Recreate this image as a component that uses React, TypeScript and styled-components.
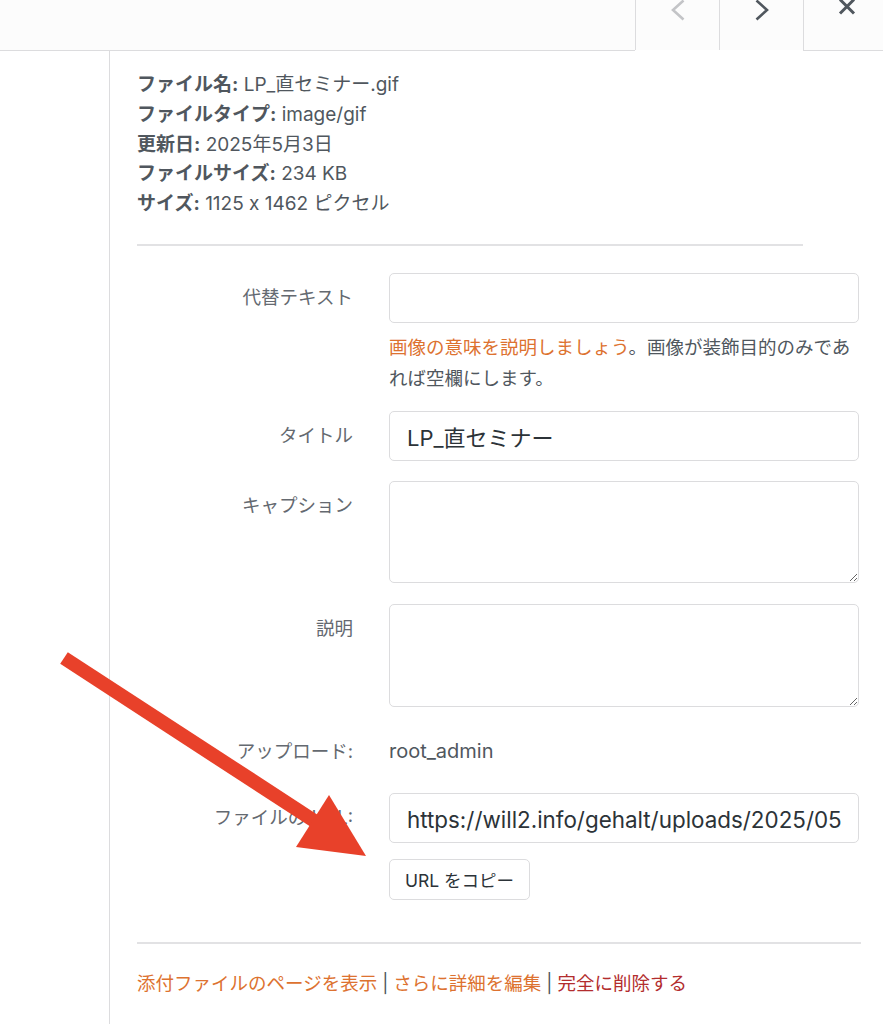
import React from "react";
import styled, { createGlobalStyle } from "styled-components";

const GlobalStyle = createGlobalStyle`
  html, body { margin: 0; padding: 0; background: #fff; }
  body {
    font-family: "Inter", "Noto Sans CJK JP", sans-serif;
    color: #50575e;
    overflow: hidden;
  }
  * { box-sizing: border-box; }
`;

const Page = styled.div`
  position: relative;
  width: 883px;
  height: 1024px;
  overflow: hidden;
`;

const Header = styled.header`
  display: flex;
  height: 51px;
  background: #fff;
`;

const HeaderSpacer = styled.div`
  flex: 1;
  height: 51px;
  background: #fcfcfc;
  border-bottom: 1px solid #dcdcde;
`;

const NavButton = styled.button<{ $width: number; $underline?: boolean; $pad?: number }>`
  flex: none;
  width: ${(p) => p.$width}px;
  height: ${(p) => (p.$underline ? 51 : 50)}px;
  padding: 0 0 0 ${(p) => p.$pad ?? 0}px;
  margin: 0;
  border: 0;
  border-left: 1px solid #dcdcde;
  border-bottom: ${(p) => (p.$underline ? "1px solid #dcdcde" : "0")};
  background: #fcfcfc;
  display: flex;
  justify-content: center;
  align-items: flex-start;
  overflow: hidden;
  svg { margin-top: -4px; display: block; }
`;

const Main = styled.main`
  display: flex;
  height: 973px;
`;

const Gutter = styled.div`
  flex: none;
  width: 109px;
`;

const Panel = styled.section`
  flex: 1;
  border-left: 1px solid #dcdcde;
  padding: 19px 22px 0 27px;
`;

const Details = styled.div`
  width: 666px;
  padding-bottom: 25px;
  border-bottom: 2px solid #e2e2e4;
  font-size: 19px;
  line-height: 29.75px;
  color: #50575e;
  strong { font-weight: 700; color: #50575e; }
`;

const Row = styled.div<{ $mt: number }>`
  display: grid;
  grid-template-columns: 216px 470px;
  column-gap: 36px;
  margin-top: ${(p) => p.$mt}px;
`;

const Label = styled.label`
  text-align: right;
  padding-top: 9px;
  font-size: 18.5px;
  line-height: 30px;
  color: #646970;
  white-space: nowrap;
`;

const Field = styled.div`
  display: flex;
  flex-direction: column;
  align-items: flex-start;
`;

const TextInput = styled.input<{ $size?: number }>`
  width: 470px;
  height: 50px;
  border: 1px solid #dcdcde;
  border-radius: 5px;
  background: #fff;
  padding: 0 17px;
  font-family: "Inter", "Noto Sans CJK JP", sans-serif;
  font-size: ${(p) => p.$size ?? 22}px;
  color: #2c3338;
  outline: none;
`;

const TextArea = styled.textarea<{ $h: number }>`
  width: 470px;
  height: ${(p) => p.$h}px;
  border: 1px solid #dcdcde;
  border-radius: 5px;
  background: #fff;
  padding: 8px 17px;
  font-family: "Inter", "Noto Sans CJK JP", sans-serif;
  font-size: 22px;
  color: #2c3338;
  outline: none;
  display: block;
`;

const Help = styled.p`
  margin: 9px 0 0;
  font-size: 18.5px;
  line-height: 31px;
  color: #50575e;
`;

const Link = styled.a<{ $danger?: boolean }>`
  color: ${(p) => (p.$danger ? "#b32d2e" : "#dd7230")};
  text-decoration: none;
`;

const Value = styled.div`
  padding-top: 9px;
  font-size: 20px;
  line-height: 30px;
  color: #50575e;
`;

const CopyButton = styled.button`
  margin-top: 16px;
  height: 41px;
  padding: 0 15px;
  border: 1px solid #dcdcde;
  border-radius: 5px;
  background: #fff;
  font-family: "Inter", "Noto Sans CJK JP", sans-serif;
  font-size: 17.5px;
  color: #2c3338;
`;

const Divider = styled.hr`
  margin: 42px 0 0;
  border: 0;
  border-top: 2px solid #e2e2e4;
`;

const Actions = styled.div`
  margin-top: 24px;
  font-size: 18.5px;
  line-height: 30px;
  color: #50575e;
`;

const Sep = styled.span`
  color: #50575e;
  margin: 0 5px;
`;

const ArrowLayer = styled.svg`
  position: absolute;
  left: 0;
  top: 0;
  pointer-events: none;
`;

const Chevron = ({ dir, color }: { dir: "left" | "right"; color: string }) => (
  <svg width="20" height="28" viewBox="0 0 20 28">
    <polyline
      points={dir === "left" ? "15.5,4.5 5,14 15.5,23.5" : "4.5,4.5 15,14 4.5,23.5"}
      fill="none"
      stroke={color}
      strokeWidth="2.6"
    />
  </svg>
);

const CloseIcon = () => (
  <svg width="20" height="28" viewBox="0 0 20 28">
    <path d="M3 3.5 L17 17.5 M17 3.5 L3 17.5" stroke="#50575e" strokeWidth="3" fill="none" />
  </svg>
);

export default function App() {
  return (
    <Page>
      <GlobalStyle />
      <Header>
        <HeaderSpacer />
        <NavButton $width={84} aria-label="前へ">
          <Chevron dir="left" color="#c3c4c7" />
        </NavButton>
        <NavButton $width={84} aria-label="次へ">
          <Chevron dir="right" color="#50575e" />
        </NavButton>
        <NavButton $width={80} $underline $pad={6} aria-label="閉じる">
          <CloseIcon />
        </NavButton>
      </Header>
      <Main>
        <Gutter />
        <Panel>
          <Details>
            <div><strong>ファイル名:</strong> LP_直セミナー.gif</div>
            <div><strong>ファイルタイプ:</strong> image/gif</div>
            <div><strong>更新日:</strong> 2025年5月3日</div>
            <div><strong>ファイルサイズ:</strong> 234 KB</div>
            <div><strong>サイズ:</strong> 1125 x 1462 ピクセル</div>
          </Details>

          <Row $mt={27}>
            <Label>代替テキスト</Label>
            <Field>
              <TextInput defaultValue="" />
              <Help>
                <Link href="#">画像の意味を説明しましょう</Link>。画像が装飾目的のみであれば空欄にします。
              </Help>
            </Field>
          </Row>

          <Row $mt={17}>
            <Label>タイトル</Label>
            <Field>
              <TextInput defaultValue="LP_直セミナー" />
            </Field>
          </Row>

          <Row $mt={20}>
            <Label>キャプション</Label>
            <Field>
              <TextArea $h={102} />
            </Field>
          </Row>

          <Row $mt={21}>
            <Label>説明</Label>
            <Field>
              <TextArea $h={103} />
            </Field>
          </Row>

          <Row $mt={20}>
            <Label>アップロード:</Label>
            <Value>root_admin</Value>
          </Row>

          <Row $mt={27}>
            <Label>ファイルの URL:</Label>
            <Field>
              <TextInput
                $size={22.4}
                readOnly
                defaultValue="https://will2.info/gehalt/uploads/2025/05/LP_直セミナー.gif"
              />
              <CopyButton>URL をコピー</CopyButton>
            </Field>
          </Row>

          <Divider />

          <Actions>
            <Link href="#">添付ファイルのページを表示</Link>
            <Sep>|</Sep>
            <Link href="#">さらに詳細を編集</Link>
            <Sep>|</Sep>
            <Link href="#" $danger>完全に削除する</Link>
          </Actions>
        </Panel>
      </Main>

      <ArrowLayer width="883" height="1024" viewBox="0 0 883 1024">
        <line x1="64" y1="658" x2="316" y2="822" stroke="#e8412a" strokeWidth="14" />
        <polygon points="329,795 296,847 366,856" fill="#e8412a" />
      </ArrowLayer>
    </Page>
  );
}
